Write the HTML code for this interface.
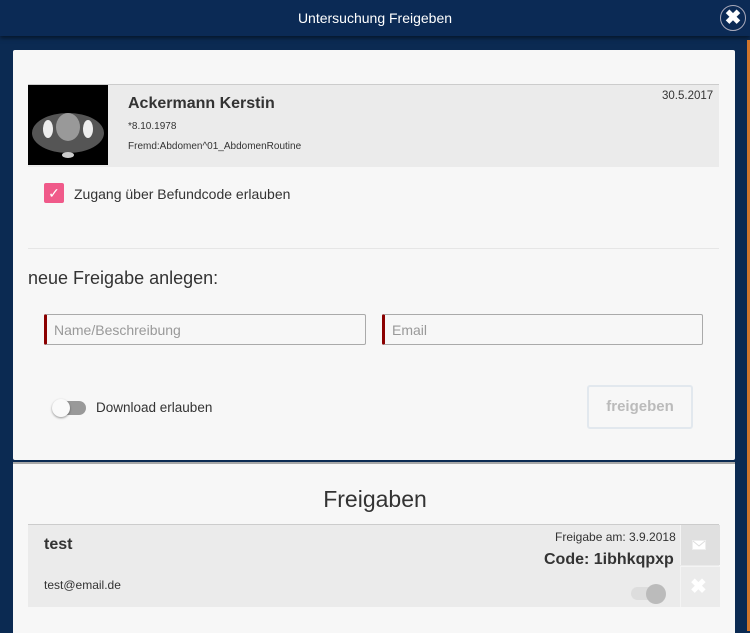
<!DOCTYPE html>
<html><head><style>
body{margin:0;width:750px;height:631px;overflow:hidden;background:#0b2a52;font-family:"Liberation Sans",sans-serif;position:relative}
.hdr{position:absolute;left:0;top:0;width:750px;height:36px;background:#0b2a55;box-shadow:0 2px 4px rgba(0,0,0,.5);color:#fff;font-size:14px;text-align:center;line-height:36px}
.close{position:absolute;left:720px;top:5px;width:24px;height:24px;border:1px solid #aab;border-radius:50%;background:#0b2a55;color:#fff;font-size:20px;font-weight:bold;text-align:center;line-height:24px}
.orange{position:absolute;left:747px;top:40px;width:3px;height:591px;background:#d0752b}
.p1{position:absolute;left:13px;top:50px;width:722px;height:410px;background:#f7f7f7;border-radius:2px}
.p2{position:absolute;left:13px;top:462px;width:722px;height:169px;background:#f7f7f7;border-top:2px solid #a8a8a8}
.ab{position:absolute;white-space:nowrap}
.inp{position:absolute;top:314px;height:31px;border:1px solid #aaa;border-left:3px solid #8b0000;border-radius:2px;background:#f7f7f7;color:#999;font-size:14px;line-height:31px;padding-left:7px;box-sizing:border-box}
</style></head><body>
<div class="hdr">Untersuchung Freigeben</div>
<div class="close">✖</div>
<div class="orange"></div>
<div class="p1"></div>
<div class="ab" style="left:28px;top:84px;width:691px;height:82px;background:#ebebeb;border-top:1px solid #ccc"></div>
<svg class="ab" style="left:28px;top:85px" width="80" height="80"><rect width="80" height="80" fill="#000"/><ellipse cx="40" cy="48" rx="36" ry="20" fill="#555"/><ellipse cx="40" cy="42" rx="12" ry="14" fill="#999"/><ellipse cx="20" cy="44" rx="5" ry="9" fill="#eee"/><ellipse cx="60" cy="44" rx="5" ry="9" fill="#eee"/><ellipse cx="40" cy="70" rx="6" ry="3" fill="#ccc"/></svg>
<div class="ab" style="left:128px;top:95px;font-size:16px;font-weight:bold;color:#333">Ackermann Kerstin</div>
<div class="ab" style="left:128px;top:121px;font-size:10px;color:#333">*8.10.1978</div>
<div class="ab" style="left:128px;top:141px;font-size:10px;color:#333">Fremd:Abdomen^01_AbdomenRoutine</div>
<div class="ab" style="left:662px;top:90px;font-size:11.5px;color:#333">30.5.2017</div>
<div class="ab" style="left:44px;top:183px;width:20px;height:20px;background:#f05a8a;border-radius:2px;color:#fff;font-size:14px;text-align:center;line-height:20px">✓</div>
<div class="ab" style="left:74px;top:186px;font-size:14px;color:#333">Zugang über Befundcode erlauben</div>
<div class="ab" style="left:28px;top:248px;width:691px;height:1px;background:#e6e6e6"></div>
<div class="ab" style="left:28px;top:268px;font-size:18px;color:#333">neue Freigabe anlegen:</div>
<div class="inp" style="left:44px;width:322px">Name/Beschreibung</div>
<div class="inp" style="left:382px;width:321px">Email</div>
<div class="ab" style="left:60px;top:401px;width:26px;height:14px;background:#999;border-radius:7px"></div>
<div class="ab" style="left:52px;top:399px;width:18px;height:18px;background:#fafafa;border-radius:50%;box-shadow:0 1px 2px rgba(0,0,0,.4)"></div>
<div class="ab" style="left:96px;top:400px;font-size:13.5px;color:#333">Download erlauben</div>
<div class="ab" style="left:587px;top:385px;width:106px;height:44px;border:2px solid #e2e8ee;border-radius:3px;box-sizing:border-box;color:#bbb;font-weight:bold;font-size:15px;text-align:center;line-height:40px">freigeben</div>
<div class="p2"></div>
<div class="ab" style="left:0;width:750px;text-align:center;top:486px;font-size:23px;color:#333">Freigaben</div>
<div class="ab" style="left:28px;top:524px;width:691px;height:82px;background:#ebebeb;border-top:1px solid #ccc"></div>
<div class="ab" style="left:680px;top:525px;width:39px;height:40px;background:#e0e0e0;border-left:1px solid #f4f4f4"></div>
<div class="ab" style="left:680px;top:566px;width:39px;height:40px;background:#ebebeb;border-left:1px solid #f4f4f4;border-top:1px solid #f4f4f4"></div>
<svg class="ab" style="left:692px;top:540px" width="14" height="10"><rect x=".5" y=".5" width="13" height="9" fill="#fff" stroke="#eee"/><path d="M1 1L7 6L13 1" stroke="#ddd" fill="none"/></svg>
<div class="ab" style="left:690px;top:574px;font-size:20px;color:#fff;font-weight:bold">✖</div>
<div class="ab" style="left:44px;top:536px;font-size:16px;font-weight:bold;color:#333">test</div>
<div class="ab" style="left:44px;top:578px;font-size:12px;color:#333">test@email.de</div>
<div class="ab" style="left:555px;top:530px;font-size:12px;color:#333">Freigabe am: 3.9.2018</div>
<div class="ab" style="left:544px;top:551px;font-size:16px;font-weight:bold;color:#333">Code: 1ibhkqpxp</div>
<div class="ab" style="left:631px;top:587px;width:30px;height:13px;background:#ddd;border-radius:7px"></div>
<div class="ab" style="left:646px;top:584px;width:20px;height:20px;background:#bbb;border-radius:50%"></div>
</body></html>
